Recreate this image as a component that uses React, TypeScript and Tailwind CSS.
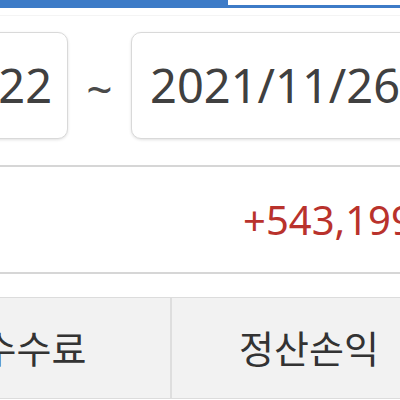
const font = { fontFamily: '"Noto Sans", "Noto Sans CJK KR", sans-serif' };

const DateBox = ({ value }: { value: string }) => (
  <div className="w-[285px] h-[107px] shrink-0 flex items-center pl-[18px] rounded-[10px] border border-[#d9d9d9] bg-white shadow-[0_1px_3px_rgba(0,0,0,0.12)]">
    <span className="text-[47px] leading-none text-[#404040] whitespace-nowrap">{value}</span>
  </div>
);

export default function App() {
  return (
    <div className="w-[400px] h-[400px] overflow-hidden bg-white" style={font}>
      {/* tabs */}
      <div className="flex h-[8px]">
        <div className="w-[228px] bg-[#3d7bc7]" />
        <div className="flex-1 border-b-[3px] border-[#3d7bc7]" />
      </div>
      <div className="h-[8px] border-b border-[#f4f4f4]" />

      {/* period */}
      <div className="flex items-center ml-[-217px] mt-[16px]">
        <DateBox value="2021/11/22" />
        <div className="w-[63px] shrink-0 text-center text-[46px] leading-none text-[#4a4a4a] pt-[4px]">~</div>
        <DateBox value="2021/11/26" />
      </div>

      {/* summary */}
      <div className="mt-[26px] h-[2px] bg-[#d6d6d6]" />
      <div className="h-[105px] flex items-center">
        <span className="ml-[243px] text-[40px] leading-none text-[#b9322c] whitespace-nowrap">+543,199</span>
      </div>
      <div className="h-[2px] bg-[#d6d6d6]" />

      {/* table head */}
      <div className="mt-[23px] flex ml-[-102px] h-[102px] bg-[#f2f2f2] border-t border-b border-[#dcdcdc]">
        <div className="w-[274px] shrink-0 flex items-center justify-center border-r-2 border-[#dedede] text-[38px] text-[#333]">
          수수료
        </div>
        <div className="w-[274px] shrink-0 flex items-center justify-center text-[38px] text-[#333]">
          정산손익
        </div>
      </div>
    </div>
  );
}
